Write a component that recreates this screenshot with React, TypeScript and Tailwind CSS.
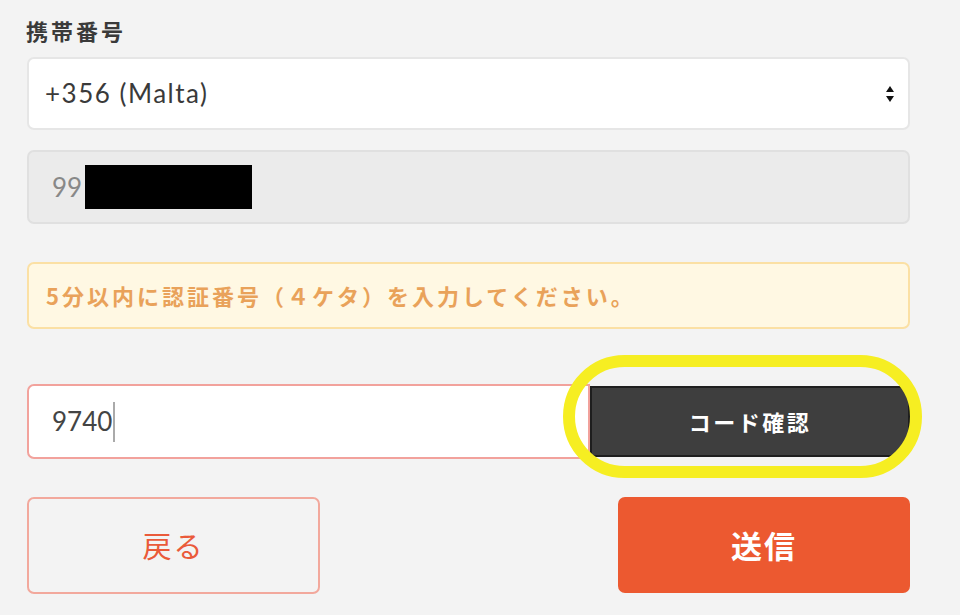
import React from "react";

export default function App() {
  const jp = { fontFamily: '"Noto Sans CJK JP", "Noto Sans", sans-serif' };
  const lat = { fontFamily: 'Lato, "Noto Sans CJK JP", sans-serif' };
  return (
    <div className="w-[960px] h-[615px] bg-[#f3f3f3] overflow-hidden" style={jp}>
      <div className="pl-[27px] pr-[50px] pt-[16px] flex flex-col">
        <div className="text-[22px] font-bold text-[#3a3a3a] leading-[28px] h-[28px] tracking-[3px] ml-[-1px]">携帯番号</div>
        <div className="mt-[13px] h-[73px] bg-white border-2 border-[#e6e6e6] rounded-[7px] flex items-center pl-[16px] pr-[10px] justify-between">
          <span className="text-[26px] text-[#3a3a3a] tracking-[1.5px]" style={lat}>+356 (Malta)</span>
          <svg width="12" height="20" viewBox="0 0 12 20" className="mr-[2px]">
            <path d="M6 2 L10 8 L2 8 Z" fill="#111" />
            <path d="M2 12 L10 12 L6 18 Z" fill="#111" />
          </svg>
        </div>
        <div className="mt-[20px] h-[74px] bg-[#ebebeb] border-2 border-[#e0e0e0] rounded-[7px] flex items-center pl-[23px]">
          <span className="text-[26px] text-[#888]" style={lat}>99</span>
          <div className="w-[167px] h-[44px] bg-black ml-[3px]" />
        </div>
        <div className="mt-[38px] h-[67px] bg-[#fff8e3] border-2 border-[#fbe0a4] rounded-[7px] flex items-center pl-[17px]">
          <span className="text-[22px] font-bold text-[#e9a25a] tracking-[3px]">5分以内に認証番号（４ケタ）を入力してください。</span>
        </div>
        <div className="mt-[55px] h-[75px] flex relative">
          <div className="flex-1 bg-white border-2 border-[#f2a29c] rounded-l-[7px] flex items-center pl-[23px]">
            <span className="text-[26px] text-[#444]" style={lat}>9740</span>
            <span className="w-[2px] h-[40px] bg-[#aaa] ml-[1px]" />
          </div>
          <div className="w-[320px] h-[71px] mt-[2px] bg-[#3e3e3e] border-2 border-[#1e1e1e] rounded-r-[10px] flex items-center justify-center">
            <span className="text-[22px] font-bold text-white tracking-[2.5px]">コード確認</span>
          </div>
          <div className="absolute left-[536px] top-[-29px] w-[359px] h-[123px] rounded-full border-[12px] border-[#f6ee22]" />
        </div>
        <div className="mt-[38px] flex justify-between">
          <div className="w-[293px] h-[97px] border-2 border-[#f2a89c] rounded-[7px] flex items-center justify-center">
            <span className="text-[29px] text-[#ea5a3a] tracking-[2px]">戻る</span>
          </div>
          <div className="w-[292px] h-[96px] bg-[#ec5930] rounded-[7px] flex items-center justify-center">
            <span className="text-[31px] font-bold text-white tracking-[2px]">送信</span>
          </div>
        </div>
      </div>
    </div>
  );
}
